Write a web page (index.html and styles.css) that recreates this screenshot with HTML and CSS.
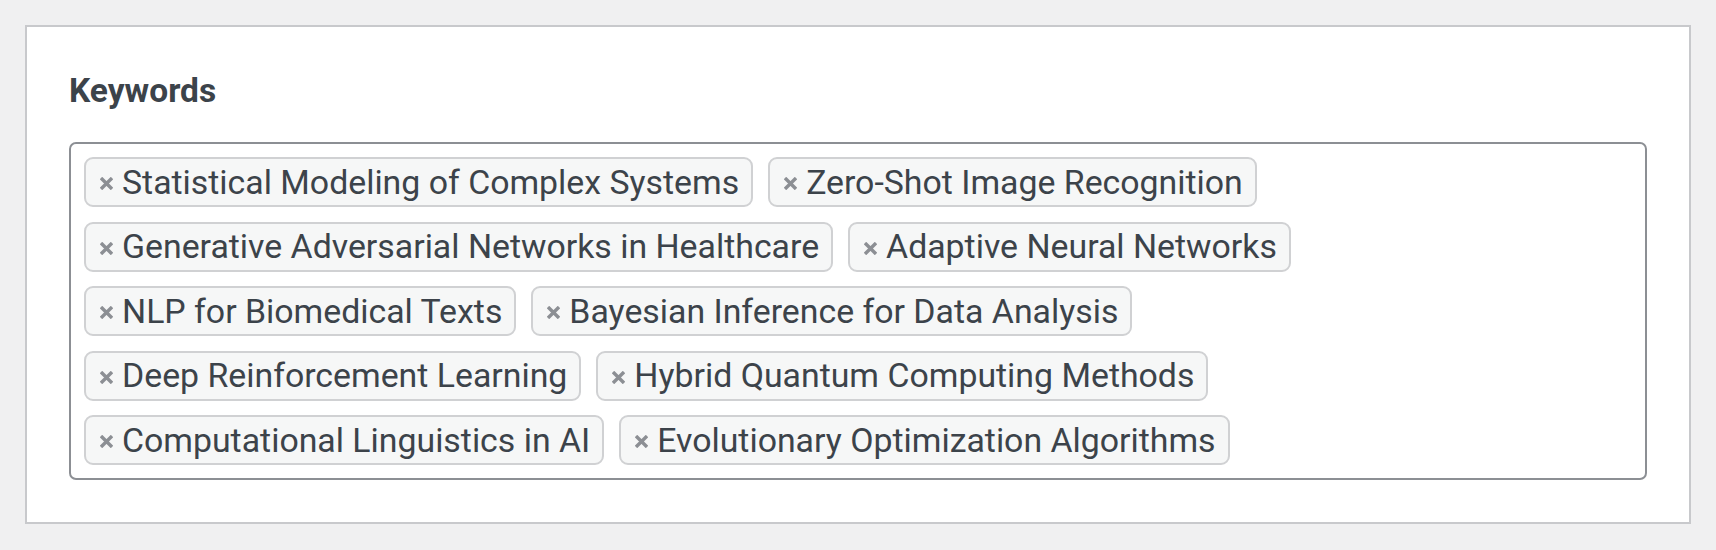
FILE: index.html
```html
<!DOCTYPE html>
<html lang="en">
<head>
    <meta charset="UTF-8">
    <meta name="viewport" content="width=device-width, initial-scale=1.0">
    <title>Keywords</title>
    <link rel="stylesheet" href="styles.css">
</head>
<body>
    <div class="panel">
        <h2 class="panel-title">Keywords</h2>
        <div class="tag-box">
            <span class="tag"><svg class="tag-remove" viewBox="0 0 13 13"><path d="M1 1L12 12M12 1L1 12"/></svg>Statistical Modeling of Complex Systems</span>
            <span class="tag"><svg class="tag-remove" viewBox="0 0 13 13"><path d="M1 1L12 12M12 1L1 12"/></svg>Zero-Shot Image Recognition</span>
            <span class="tag"><svg class="tag-remove" viewBox="0 0 13 13"><path d="M1 1L12 12M12 1L1 12"/></svg>Generative Adversarial Networks in Healthcare</span>
            <span class="tag"><svg class="tag-remove" viewBox="0 0 13 13"><path d="M1 1L12 12M12 1L1 12"/></svg>Adaptive Neural Networks</span>
            <span class="tag"><svg class="tag-remove" viewBox="0 0 13 13"><path d="M1 1L12 12M12 1L1 12"/></svg>NLP for Biomedical Texts</span>
            <span class="tag"><svg class="tag-remove" viewBox="0 0 13 13"><path d="M1 1L12 12M12 1L1 12"/></svg>Bayesian Inference for Data Analysis</span>
            <span class="tag"><svg class="tag-remove" viewBox="0 0 13 13"><path d="M1 1L12 12M12 1L1 12"/></svg>Deep Reinforcement Learning</span>
            <span class="tag"><svg class="tag-remove" viewBox="0 0 13 13"><path d="M1 1L12 12M12 1L1 12"/></svg>Hybrid Quantum Computing Methods</span>
            <span class="tag"><svg class="tag-remove" viewBox="0 0 13 13"><path d="M1 1L12 12M12 1L1 12"/></svg>Computational Linguistics in AI</span>
            <span class="tag"><svg class="tag-remove" viewBox="0 0 13 13"><path d="M1 1L12 12M12 1L1 12"/></svg>Evolutionary Optimization Algorithms</span>
        </div>
    </div>
</body>
</html>
```

FILE: styles.css
```css
:root {
    --page-bg: #f0f0f1;
    --panel-border: #c8c9cc;
    --text-color: #3c434a;
    --input-border: #8c8f94;
    --tag-bg: #f6f7f7;
    --tag-border: #d0d1d3;
    --icon-color: #8c8f94;
}

body {
    margin: 0;
    padding: 25px;
    background-color: var(--page-bg);
    color: var(--text-color);
    font-family: Roboto, 'Liberation Sans', sans-serif;
}

.panel {
    background-color: #ffffff;
    border: 2px solid var(--panel-border);
    padding: 44px 42px 42px;
}

.panel-title {
    margin: 0 0 31px;
    font-size: 33.5px;
    font-weight: 700;
    line-height: 40px;
}

.tag-box {
    display: flex;
    flex-wrap: wrap;
    gap: 14.5px 15px;
    padding: 13px;
    border: 2px solid var(--input-border);
    border-radius: 7px;
}

.tag {
    display: inline-flex;
    align-items: center;
    height: 50px;
    box-sizing: border-box;
    padding: 0 12px 0 14px;
    background-color: var(--tag-bg);
    border: 2px solid var(--tag-border);
    border-radius: 9px;
    font-size: 33.85px;
    white-space: nowrap;
}

.tag-remove {
    width: 13px;
    height: 13px;
    margin: 3px 9px 0 0;
    flex-shrink: 0;
    fill: none;
    stroke: var(--icon-color);
    stroke-width: 3.4;
}
```
